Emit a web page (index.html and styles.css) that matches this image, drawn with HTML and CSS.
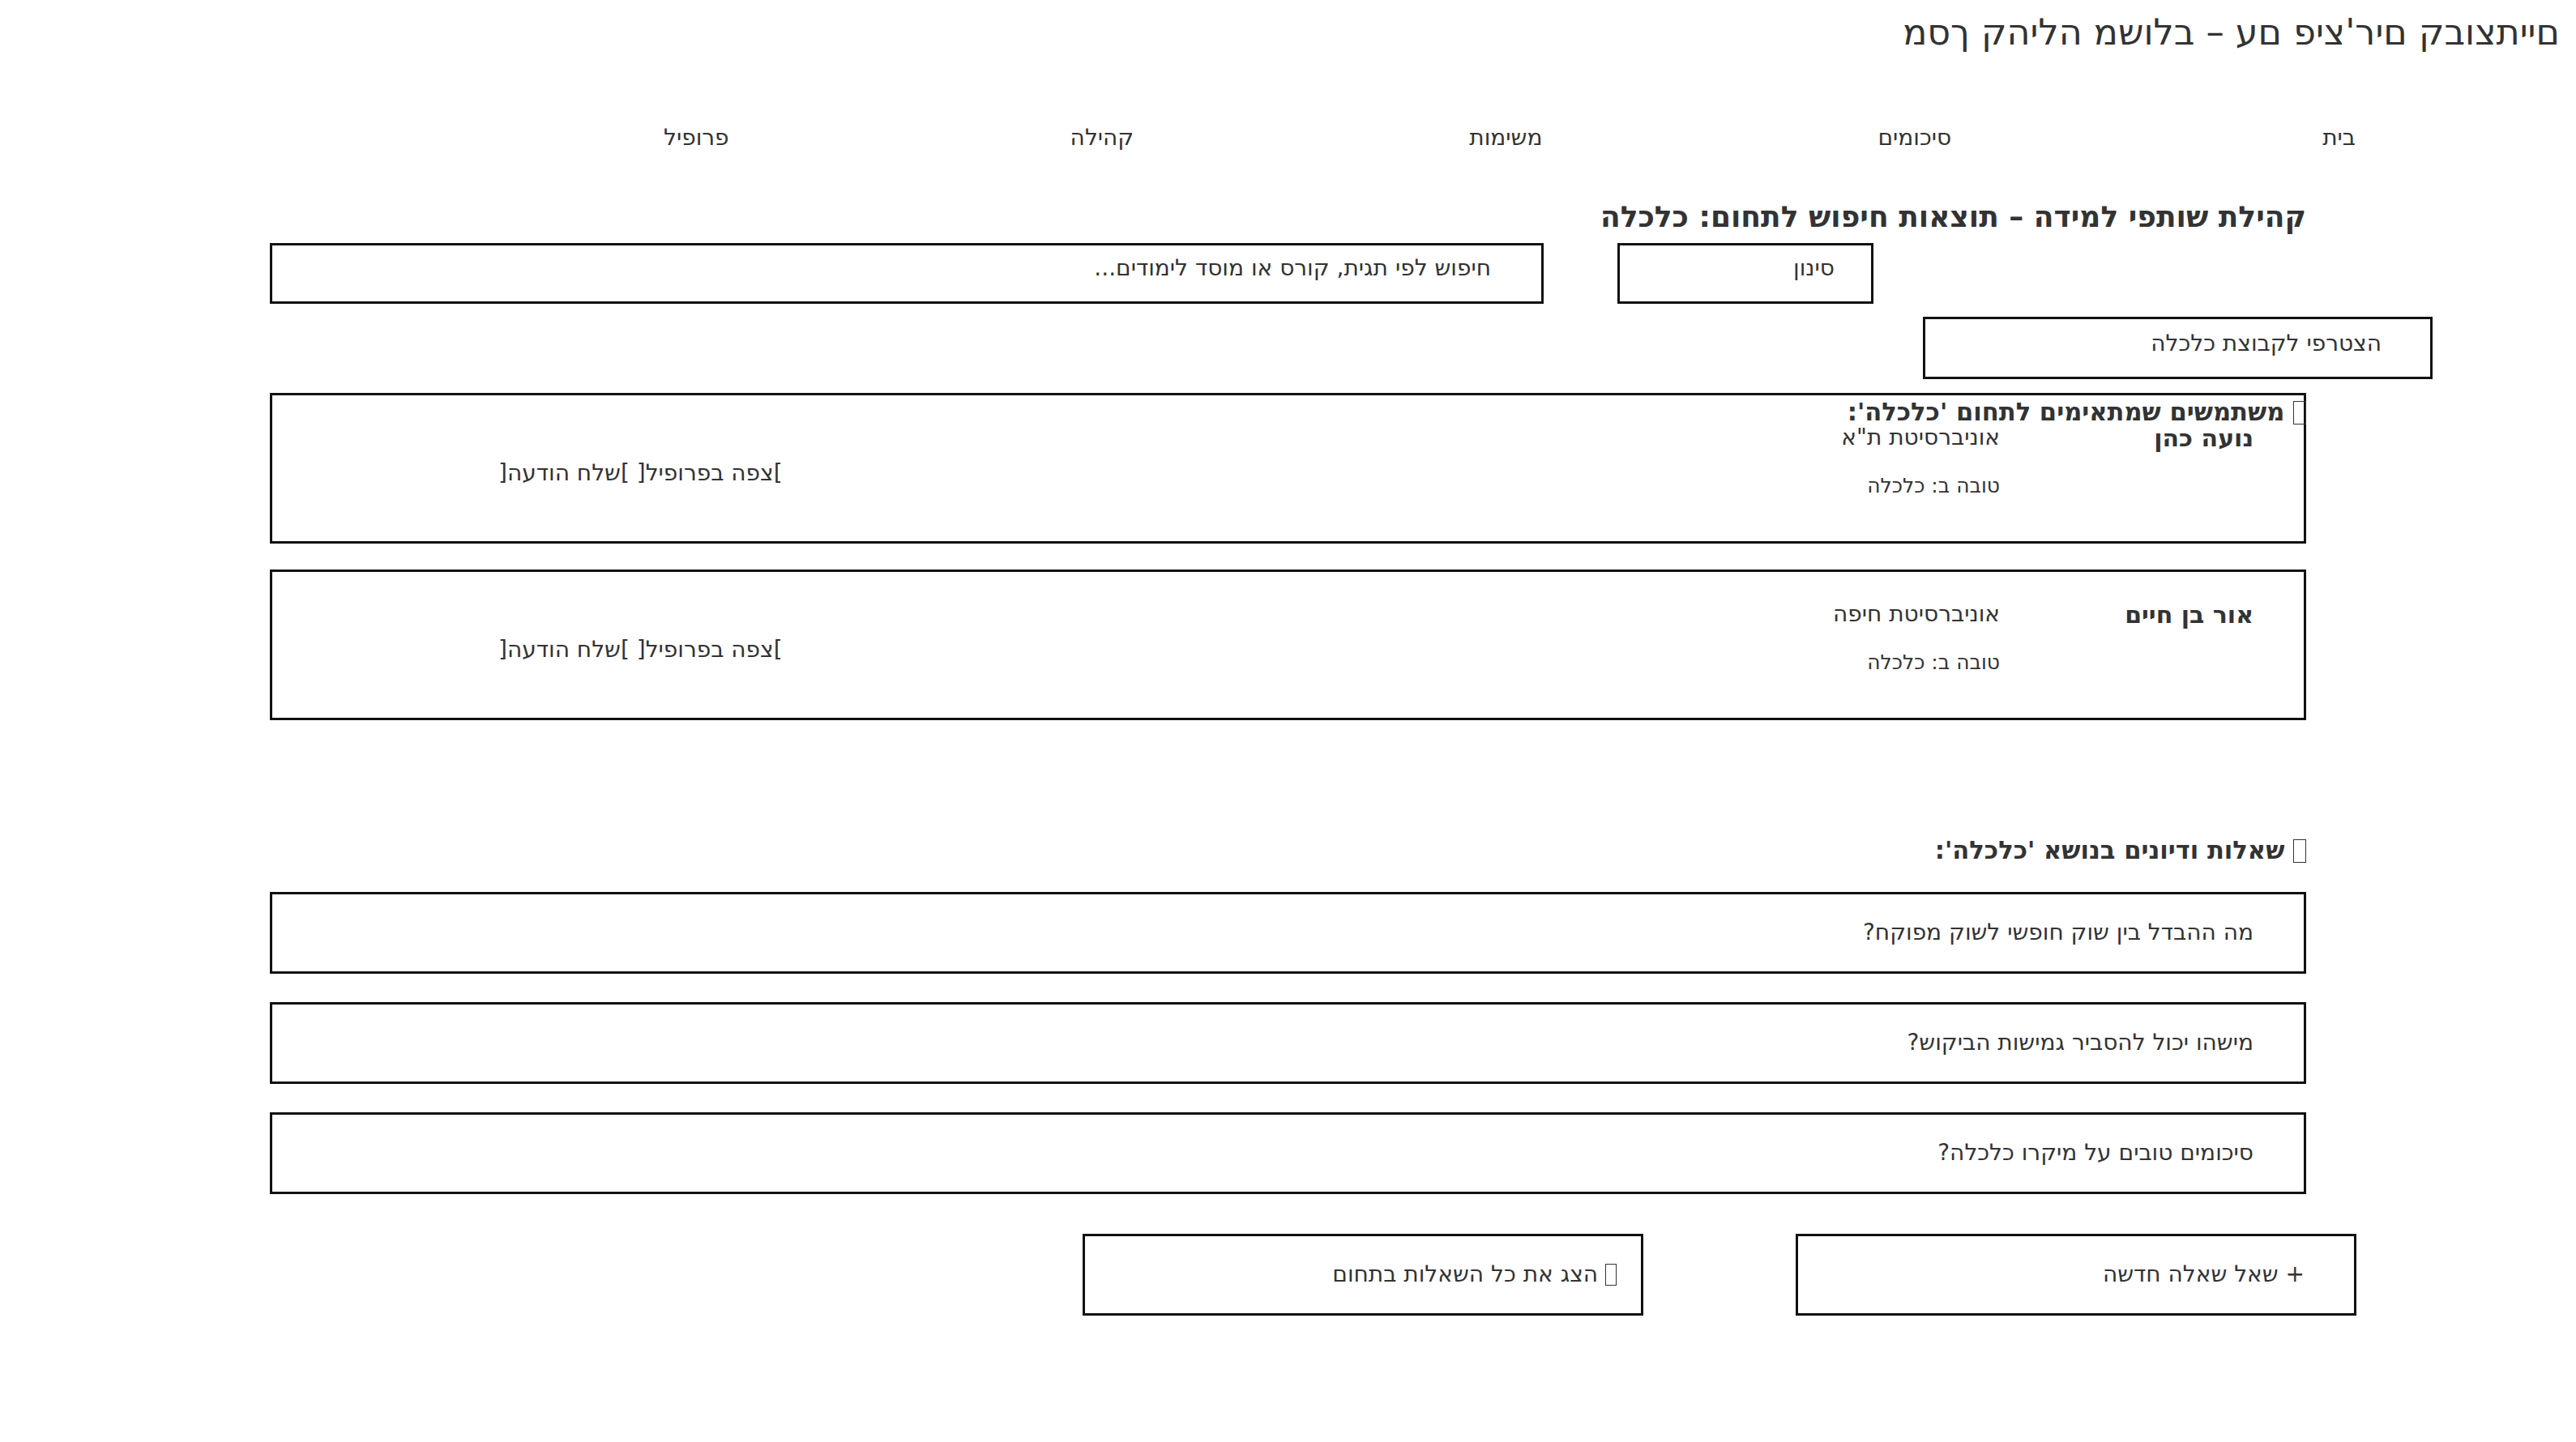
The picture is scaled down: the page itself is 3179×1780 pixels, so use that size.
FILE: index.html
```html
<!DOCTYPE html>
<html lang="he" dir="rtl">
<head>
<meta charset="utf-8">
<title>מסך קהילה משולב</title>
<link rel="stylesheet" href="styles.css">
</head>
<body>
<header class="top">
  <h1 class="title"><bdo dir="ltr">מסך קהילה משולב – עם פיצ'רים קבוצתיים</bdo></h1>
</header>
<nav class="nav">
  <a class="nav-item">בית</a>
  <a class="nav-item">סיכומים</a>
  <a class="nav-item">משימות</a>
  <a class="nav-item">קהילה</a>
  <a class="nav-item nav-last">פרופיל</a>
</nav>
<main class="wrap">
  <h2 class="page-head">קהילת שותפי למידה – תוצאות חיפוש לתחום: כלכלה</h2>
  <div class="search-row">
    <div class="box filter">סינון</div>
    <div class="box search">חיפוש לפי תגית, קורס או מוסד לימודים...</div>
  </div>
  <div class="box join">הצטרפי לקבוצת כלכלה</div>

  <h3 class="sec-head sec-users"><span class="tofu"></span> משתמשים שמתאימים לתחום 'כלכלה':</h3>
  <div class="box user-card">
    <div class="name">נועה כהן</div>
    <div class="info">
      <div class="uni">אוניברסיטת ת"א</div>
      <div class="tags">טובה ב: כלכלה</div>
    </div>
    <div class="actions">]צפה בפרופיל[ ]שלח הודעה[</div>
  </div>
  <div class="box user-card">
    <div class="name">אור בן חיים</div>
    <div class="info">
      <div class="uni">אוניברסיטת חיפה</div>
      <div class="tags">טובה ב: כלכלה</div>
    </div>
    <div class="actions">]צפה בפרופיל[ ]שלח הודעה[</div>
  </div>

  <h3 class="sec-head sec-questions"><span class="tofu"></span> שאלות ודיונים בנושא 'כלכלה':</h3>
  <div class="box question">מה ההבדל בין שוק חופשי לשוק מפוקח?</div>
  <div class="box question">מישהו יכול להסביר גמישות הביקוש?</div>
  <div class="box question">סיכומים טובים על מיקרו כלכלה?</div>

  <div class="btn-row">
    <div class="box btn btn-ask">+ שאל שאלה חדשה</div>
    <div class="box btn btn-all"><span class="tofu tofu-sm"></span> הצג את כל השאלות בתחום</div>
  </div>
</main>
</body>
</html>
```
FILE: styles.css
```css
html, body {
  margin: 0;
  padding: 0;
  background: #fff;
}
body {
  direction: rtl;
  font-family: "DejaVu Sans", sans-serif;
  color: #333;
  font-size: 28px;
  line-height: 32px;
}
.title {
  margin: 14px 20px 0 0;
  font-size: 44.4px;
  line-height: 52px;
  font-weight: normal;
  color: #333;
}
.nav {
  display: flex;
  gap: 414px;
  margin-top: 88px;
  padding-right: 272px;
}
.nav-item {
  color: #333;
  font-size: 28px;
  line-height: 32px;
}
.nav-item:first-child {
  margin-left: 44px;
}
.nav-last {
  margin-right: 7px;
}
.wrap {
  width: 2513px;
  margin: 0 auto;
}
.page-head {
  margin: 61px 0 0 0;
  font-size: 36px;
  line-height: 42px;
  font-weight: bold;
}
.box {
  box-sizing: border-box;
  border: 3px solid #111;
}
.search-row {
  display: flex;
  justify-content: flex-end;
  gap: 91px;
  margin-top: 11px;
}
.filter, .search {
  height: 75px;
  padding-top: 12px;
}
.filter {
  width: 316px;
  padding-right: 45px;
}
.search {
  width: 1572px;
  padding-right: 62px;
}
.join {
  width: 629px;
  height: 77px;
  margin: 16px -156px 0 0;
  padding: 14px 60px 0 0;
}
.sec-head {
  font-size: 30.6px;
  line-height: 34px;
  font-weight: bold;
}
.tofu {
  display: inline-block;
  box-sizing: border-box;
  width: 16px;
  height: 29px;
  border: 1.5px solid #333;
  vertical-align: -5px;
}
.tofu-sm {
  width: 14px;
  height: 27px;
}
.sec-users {
  margin: 24px 0 -41px 0;
}
.user-card {
  height: 186px;
  margin-bottom: 32px;
  padding: 36px 62px 0;
  display: grid;
  grid-template-columns: 313px 1fr auto;
  align-items: start;
}
.name {
  font-weight: bold;
  font-size: 30px;
  line-height: 34px;
}
.uni {
  line-height: 32px;
}
.tags {
  margin-top: 29px;
  font-size: 25px;
  line-height: 30px;
}
.actions {
  margin: 44px 0 0 217px;
}
.sec-questions {
  margin: 144px 0 34px 0;
}
.question {
  height: 101px;
  margin-bottom: 35px;
  padding: 31px 62px 0;
}
.btn-row {
  display: flex;
  gap: 188px;
  margin: 49px -62px 0 0;
}
.btn {
  width: 692px;
  height: 101px;
  padding-top: 31px;
}
.btn-ask {
  padding-right: 61px;
}
.btn-all {
  padding-right: 30px;
}
```
